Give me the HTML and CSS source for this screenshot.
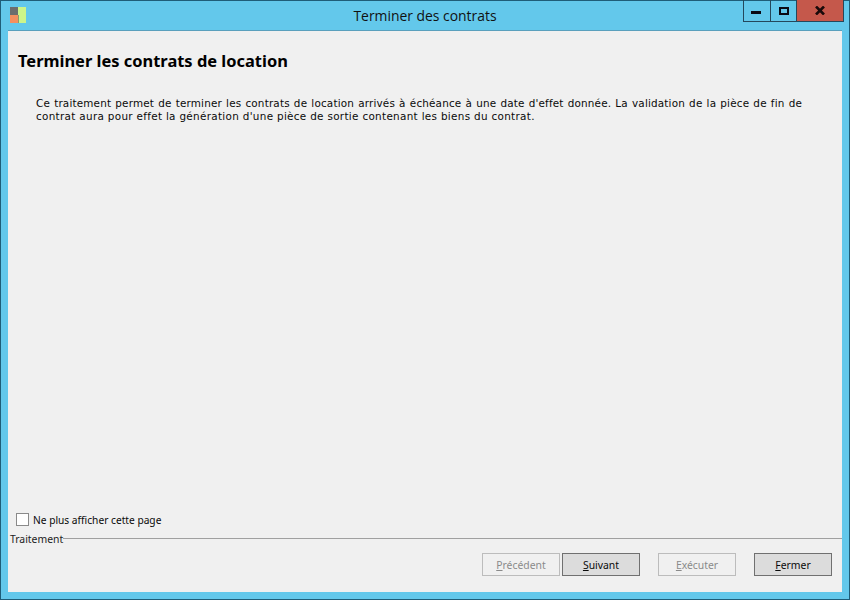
FILE: index.html
```html
<!DOCTYPE html>
<html lang="fr">
<head>
<meta charset="utf-8">
<title>Terminer des contrats</title>
<link rel="stylesheet" href="styles.css">
</head>
<body>
<div class="window">
  <header class="titlebar">
    <svg class="app-icon" width="17" height="17" viewBox="0 0 17 17">
      <rect x="0" y="0" width="8" height="8" fill="#6d6d6d"/>
      <rect x="0" y="8" width="8" height="8" fill="#f58f5f"/>
      <rect x="8" y="0" width="8" height="16" fill="#cdf58a"/>
      <rect x="8" y="8" width="1" height="8" fill="#8a9a70"/>
    </svg>
    <div class="title">Terminer des contrats</div>
    <div class="controls">
      <div class="ctl ctl-min"><svg width="12" height="4" viewBox="0 0 12 4"><rect width="10" height="3" y="0" fill="#0a0a14"/></svg></div>
      <div class="ctl ctl-max"><svg width="10" height="8" viewBox="0 0 10 8"><rect x="1" y="1" width="8" height="6" fill="none" stroke="#0a0a14" stroke-width="2"/></svg></div>
      <div class="ctl ctl-close"><svg width="10" height="9" viewBox="0 0 10 9"><path d="M1 0.5 L9 8.5 M9 0.5 L1 8.5" stroke="#1a0a0a" stroke-width="2.6" fill="none"/></svg></div>
    </div>
  </header>
  <main class="client">
    <div class="content">
      <h1 class="heading">Terminer les contrats de location</h1>
      <div class="desc">
        <p class="line-full">Ce traitement permet de terminer les contrats de location arrivés à échéance à une date d'effet donnée. La validation de la pièce de fin de</p>
        <p class="line">contrat aura pour effet la génération d'une pièce de sortie contenant les biens du contrat.</p>
      </div>
    </div>
    <label class="check"><span class="box"></span><span>Ne plus afficher cette page</span></label>
    <div class="group">
      <span class="legend">Traitement</span>
      <span class="rule"></span>
    </div>
    <div class="buttons">
      <button class="btn" disabled><u>P</u>récédent</button>
      <button class="btn btn-active"><u>S</u>uivant</button>
      <button class="btn gap" disabled><u>E</u>xécuter</button>
      <button class="btn btn-active gap"><u>F</u>ermer</button>
    </div>
  </main>
</div>
</body>
</html>
```
FILE: styles.css
```css
* { box-sizing: border-box; }
html, body { margin: 0; height: 100%; }
body { width: 850px; height: 600px; overflow: hidden; font-family: "Noto Sans", "DejaVu Sans", sans-serif; color: #0a0a0a; }
.window { width: 850px; height: 600px; background: #63c8eb; border: 1px solid #1f5d78; display: flex; flex-direction: column; padding: 0 7px 7px; }
.titlebar { height: 29px; flex: none; display: flex; align-items: flex-start; position: relative; }
.app-icon { margin: 6px 0 0 2px; }
.title { position: absolute; left: 0; right: 0; top: 6px; text-align: center; font-family: "Open Sans", sans-serif; font-size: 13.9px; line-height: 18px; color: #111; }
.controls { position: absolute; top: -1px; right: -2px; display: flex; height: 22px; border: 1px solid #24485c; border-top: 0; }
.ctl { height: 21px; display: flex; align-items: center; justify-content: center; }
.ctl-min { width: 27px; border-right: 1px solid #24485c; padding-top: 5px; }
.ctl-max { width: 26px; border-right: 1px solid #24485c; }
.ctl-close { width: 46px; background: #c5584b; }
.client { flex: 1; background: #f0f0f0; border-top: 1px solid #5aa0bd; display: flex; flex-direction: column; }
.content { flex: 1; padding: 0 10px; }
.heading { margin: 20px 0 0; font-family: "Noto Sans", sans-serif; font-size: 16.45px; line-height: 20px; font-weight: 700; color: #000; }
.desc { margin: 26px 0 0 18px; width: 766px; font-family: "DejaVu Sans", sans-serif; font-size: 10.4px; line-height: 13px; letter-spacing: 0.32px; }
.desc p { margin: 0; white-space: nowrap; }
.desc p.line-full { white-space: normal; letter-spacing: 0.18px; text-align: justify; text-align-last: justify; }
.check { display: flex; align-items: center; gap: 4px; height: 14px; margin: 0 0 5px 8px; font-size: 10.2px; }
.box { width: 13px; height: 13px; background: #fff; border: 1px solid #8a8a8a; margin-top: -1px; }
.group { display: flex; align-items: flex-start; height: 14px; margin-left: 2px; font-size: 10.4px; }
.legend { line-height: 13px; color: #222; margin-top: 1px; }
.rule { flex: 1; height: 1px; background: #a0a0a0; margin-top: 6px; }
.buttons { display: flex; justify-content: flex-end; gap: 2px; padding: 7px 10px 16px 0; }
.btn { width: 78px; height: 23px; padding: 0; font-family: inherit; font-size: 10.4px; background: #dcdcdc; border: 1px solid #707070; color: #0a0a0a; border-radius: 0; }
.btn[disabled] { background: #f0f0f0; border-color: #bcbcbc; color: #8a8a8a; }
.btn.gap { margin-left: 16px; }
```
